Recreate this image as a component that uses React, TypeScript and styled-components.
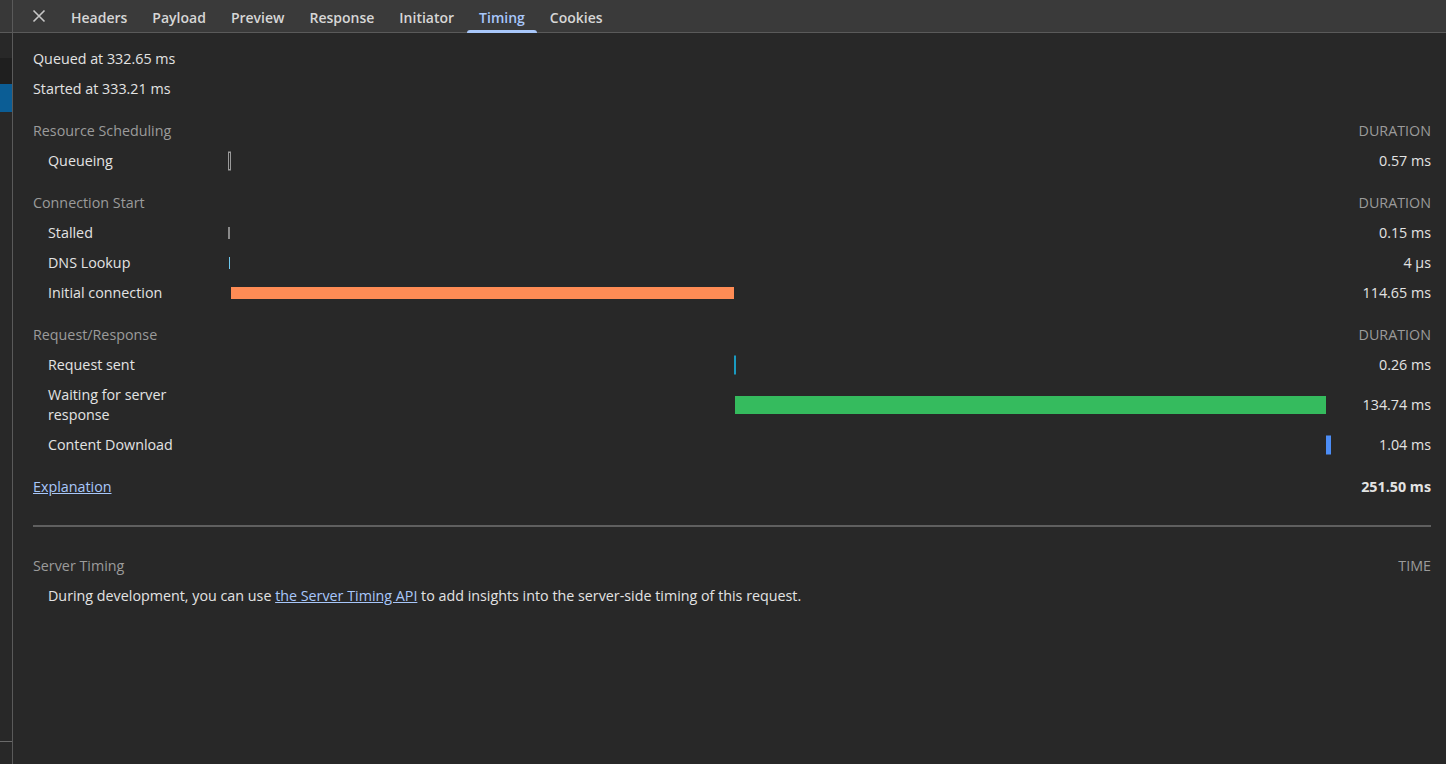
import React from "react";
import styled, { createGlobalStyle } from "styled-components";

const GlobalStyle = createGlobalStyle`
  html, body {
    margin: 0;
    padding: 0;
    background: #282828;
  }
  body {
    font-family: "Open Sans", "Noto Sans", Arial, sans-serif;
    font-size: 14.3px;
    color: #e3e3e3;
  }
`;

const TOTAL = 251.5;

type Bar = {
  start: number;
  dur: number;
  color: string;
  height: number;
  minWidth: number;
  outline?: boolean;
};

type Row = { label: string; value: string; bar?: Bar };
type Section = { title: string; rows: Row[] };

const sections: Section[] = [
  {
    title: "Resource Scheduling",
    rows: [
      {
        label: "Queueing",
        value: "0.57 ms",
        bar: { start: 0, dur: 0.57, color: "#9a9a9a", height: 19, minWidth: 3, outline: true },
      },
    ],
  },
  {
    title: "Connection Start",
    rows: [
      {
        label: "Stalled",
        value: "0.15 ms",
        bar: { start: 0.1, dur: 0.15, color: "#8a8a8a", height: 12, minWidth: 2 },
      },
      {
        label: "DNS Lookup",
        value: "4 µs",
        bar: { start: 0.3, dur: 0.004, color: "#6ec8ee", height: 12, minWidth: 1 },
      },
      {
        label: "Initial connection",
        value: "114.65 ms",
        bar: { start: 0.72, dur: 114.65, color: "#ff8c55", height: 12, minWidth: 1 },
      },
    ],
  },
  {
    title: "Request/Response",
    rows: [
      {
        label: "Request sent",
        value: "0.26 ms",
        bar: { start: 115.37, dur: 0.26, color: "#1a9ac0", height: 19, minWidth: 2 },
      },
      {
        label: "Waiting for server response",
        value: "134.74 ms",
        bar: { start: 115.63, dur: 134.74, color: "#35bb5e", height: 18, minWidth: 1 },
      },
      {
        label: "Content Download",
        value: "1.04 ms",
        bar: { start: 250.37, dur: 1.04, color: "#4c8df6", height: 19, minWidth: 4 },
      },
    ],
  },
];

const tabs = ["Headers", "Payload", "Preview", "Response", "Initiator", "Timing", "Cookies"];

const Page = styled.div`
  display: flex;
  height: 764px;
  overflow: hidden;
`;

const SideStrip = styled.div`
  width: 12px;
  flex: none;
  display: flex;
  flex-direction: column;
  border-right: 1px solid #5a5a5a;
  background: #282828;
`;

const StripCell = styled.div<{ $h: number; $bg: string; $line?: boolean }>`
  height: ${(p) => p.$h}px;
  flex: none;
  background: ${(p) => p.$bg};
  border-bottom: ${(p) => (p.$line ? "1px solid #5a5a5a" : "none")};
`;

const StripFill = styled.div`
  flex: 1;
  border-bottom: 1px solid #6a6a6a;
`;

const Main = styled.div`
  flex: 1;
  display: flex;
  flex-direction: column;
  min-width: 0;
`;

const TabBar = styled.div`
  height: 32px;
  display: flex;
  align-items: stretch;
  background: #3a3a3a;
  border-bottom: 1px solid #5a5a5a;
  padding-left: 13px;
`;

const CloseButton = styled.button`
  width: 26px;
  border: none;
  background: transparent;
  padding: 0;
  display: flex;
  align-items: center;
  justify-content: center;
  margin-right: 7px;
  color: #c7c7c7;
`;

const Tab = styled.div<{ $active?: boolean }>`
  position: relative;
  display: flex;
  align-items: center;
  padding: 2px 12px 0;
  margin-right: 1px;
  font-weight: 600;
  font-size: 14px;
  color: ${(p) => (p.$active ? "#a8c7fa" : "#d6d6d6")};

  &::after {
    content: "";
    display: ${(p) => (p.$active ? "block" : "none")};
    position: absolute;
    left: 0;
    right: 0;
    bottom: -1px;
    height: 3px;
    border-radius: 3px 3px 0 0;
    background: #a8c7fa;
  }
`;

const Content = styled.div`
  padding: 11px 15px 0 20px;
`;

const Line = styled.div`
  height: 30px;
  line-height: 30px;
`;

const Grid = styled.div`
  display: grid;
  grid-template-columns: 195px 1fr 100px;
`;

const SectionTitle = styled.div`
  grid-column: 1 / 3;
  margin-top: 12px;
  line-height: 30px;
  color: #9b9b9b;
`;

const DurationHead = styled.div`
  margin-top: 12px;
  line-height: 30px;
  text-align: right;
  color: #9b9b9b;
  text-transform: uppercase;
`;

const Label = styled.div`
  padding: 5px 30px 5px 15px;
  line-height: 20px;
`;

const Track = styled.div`
  position: relative;
`;

const BarFill = styled.div<{ $color: string; $h: number; $outline?: boolean }>`
  position: absolute;
  top: 50%;
  height: ${(p) => p.$h}px;
  transform: translateY(-50%);
  box-sizing: border-box;
  background: ${(p) => (p.$outline ? "transparent" : p.$color)};
  border: ${(p) => (p.$outline ? `1px solid ${p.$color}` : "none")};
`;

const Value = styled.div`
  padding: 5px 0;
  line-height: 20px;
  display: flex;
  align-items: center;
  justify-content: flex-end;
`;

const FooterRow = styled.div`
  display: flex;
  justify-content: space-between;
  margin-top: 12px;
  line-height: 30px;
`;

const Link = styled.a`
  color: #a8c7fa;
  text-decoration: underline;
  cursor: pointer;
`;

const Total = styled.span`
  font-weight: 700;
`;

const Divider = styled.div`
  height: 2px;
  background: #5f5f5f;
  margin: 23px 0 24px;
`;

const ServerHead = styled.div`
  display: flex;
  justify-content: space-between;
  line-height: 30px;
  color: #9b9b9b;
`;

const ServerText = styled.div`
  padding-left: 15px;
  line-height: 30px;
`;

const CloseIcon = () => (
  <svg width="16" height="16" viewBox="0 0 16 16">
    <path d="M2.5 2.5 L13.5 13.5 M13.5 2.5 L2.5 13.5" stroke="currentColor" strokeWidth="1.6" />
  </svg>
);

const TimingBar = ({ bar }: { bar: Bar }) => (
  <BarFill
    $color={bar.color}
    $h={bar.height}
    $outline={bar.outline}
    style={{
      left: `${(bar.start / TOTAL) * 100}%`,
      width: `max(${bar.minWidth}px, ${(bar.dur / TOTAL) * 100}%)`,
    }}
  />
);

export default function App() {
  return (
    <>
      <GlobalStyle />
      <Page>
        <SideStrip>
          <StripCell $h={32} $bg="#383838" $line />
          <StripCell $h={25} $bg="#282828" />
          <StripCell $h={26} $bg="#1f1f1f" />
          <StripCell $h={28} $bg="#0b5d95" />
          <StripFill />
          <StripCell $h={22} $bg="#282828" />
        </SideStrip>
        <Main>
          <TabBar>
            <CloseButton aria-label="Close">
              <CloseIcon />
            </CloseButton>
            {tabs.map((t) => (
              <Tab key={t} $active={t === "Timing"}>
                {t}
              </Tab>
            ))}
          </TabBar>
          <Content>
            <Line>Queued at 332.65 ms</Line>
            <Line>Started at 333.21 ms</Line>
            <Grid>
              {sections.map((s) => (
                <React.Fragment key={s.title}>
                  <SectionTitle>{s.title}</SectionTitle>
                  <DurationHead>Duration</DurationHead>
                  {s.rows.map((r) => (
                    <React.Fragment key={r.label}>
                      <Label>{r.label}</Label>
                      <Track>{r.bar && <TimingBar bar={r.bar} />}</Track>
                      <Value>{r.value}</Value>
                    </React.Fragment>
                  ))}
                </React.Fragment>
              ))}
            </Grid>
            <FooterRow>
              <Link>Explanation</Link>
              <Total>251.50 ms</Total>
            </FooterRow>
            <Divider />
            <ServerHead>
              <span>Server Timing</span>
              <span>TIME</span>
            </ServerHead>
            <ServerText>
              During development, you can use <Link>the Server Timing API</Link> to add insights
              into the server-side timing of this request.
            </ServerText>
          </Content>
        </Main>
      </Page>
    </>
  );
}
